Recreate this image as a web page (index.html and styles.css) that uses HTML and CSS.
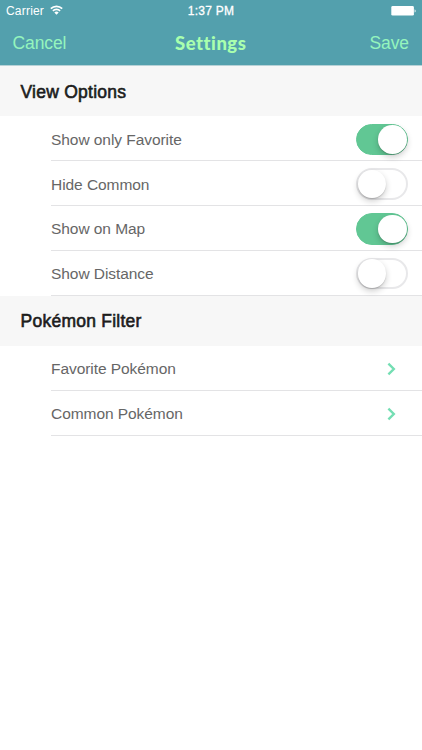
FILE: index.html
```html
<!DOCTYPE html>
<html lang="en">
<head>
  <meta charset="UTF-8">
  <meta name="viewport" content="width=device-width, initial-scale=1.0">
  <title>Settings</title>
  <link rel="stylesheet" href="styles.css">
</head>
<body>

<header class="top">
  <!-- Status bar -->
  <div class="status">
    <div class="status-left">
      <span class="carrier">Carrier</span>
      <svg class="wifi" width="13" height="10" viewBox="0 0 13 10" fill="none" stroke="#fff" stroke-width="1.7">
        <path d="M0.8 3.7a8 8 0 0 1 11.4 0"/>
        <path d="M2.9 5.9a5.1 5.1 0 0 1 7.2 0"/>
        <path d="M6.5 9.8L4.3 7.6a3 3 0 0 1 4.4 0z" fill="#fff" stroke="none"/>
      </svg>
    </div>
    <span class="clock">1:37 PM</span>
    <div class="status-right">
      <svg width="25" height="10" viewBox="0 0 25 10" fill="#fff">
        <rect x="0.3" y="0" width="22.6" height="9.6" rx="1.4"/>
        <path d="M23.6 3.2c1.4.5 1.4 2.8 0 3.3z"/>
      </svg>
    </div>
  </div>

  <!-- Navigation -->
  <nav class="nav">
    <span class="nav-btn">Cancel</span>
    <h1>Settings</h1>
    <span class="nav-btn save">Save</span>
  </nav>
</header>

<main>
  <h2>View Options</h2>
  <ul class="list">
    <li><span>Show only Favorite</span><i class="switch on"></i></li>
    <li><span>Hide Common</span><i class="switch"></i></li>
    <li><span>Show on Map</span><i class="switch on"></i></li>
    <li><span>Show Distance</span><i class="switch"></i></li>
  </ul>

  <h2>Pokémon Filter</h2>
  <ul class="list">
    <li>
      <span>Favorite Pokémon</span>
      <svg class="arrow" width="9" height="14" viewBox="0 0 9 14"><path d="M1.4 1.7L6.8 7L1.4 12.3"/></svg>
    </li>
    <li>
      <span>Common Pokémon</span>
      <svg class="arrow" width="9" height="14" viewBox="0 0 9 14"><path d="M1.4 1.7L6.8 7L1.4 12.3"/></svg>
    </li>
  </ul>
</main>

</body>
</html>
```

FILE: styles.css
```css
:root {
  --color-bar: #53a0ad;
  --color-tint: #95f5bd;
  --color-title: #a9ffae;
  --color-section: #f7f7f7;
  --color-line: #e3e3e5;
  --color-green: #61c794;
}

* {
  box-sizing: border-box;
}

body {
  margin: 0;
  background: #fff;
  font-family: "Liberation Sans", Arial, sans-serif;
}

/* Top bar */
.top {
  height: 66px;
  background: var(--color-bar);
  border-bottom: 1px solid #b7d2d7;
}

.status {
  display: grid;
  grid-template-columns: 1fr auto 1fr;
  align-items: center;
  height: 22px;
  padding: 0 6px;
  color: #fff;
  font-size: 12px;
}

.status-left {
  display: flex;
  align-items: center;
  gap: 6px;
}

.carrier {
  letter-spacing: 0.2px;
}

.wifi {
  margin-bottom: 2px;
}

.clock {
  letter-spacing: 0.25px;
  -webkit-text-stroke: 0.3px #fff;
}

.status-right {
  display: flex;
  justify-content: flex-end;
}

.nav {
  display: grid;
  grid-template-columns: 1fr auto 1fr;
  align-items: center;
  height: 43px;
  padding: 0 13px 0 12.5px;
}

.nav-btn {
  color: var(--color-tint);
  font-size: 17.5px;
  letter-spacing: -0.1px;
}

.save {
  text-align: right;
}

.nav h1 {
  margin: 0;
  padding-bottom: 2px;
  color: var(--color-title);
  font-family: Lato, sans-serif;
  font-size: 18.5px;
  font-weight: 900;
  letter-spacing: 0.5px;
  font-variant-ligatures: none;
}

/* Sections */
h2 {
  display: flex;
  align-items: center;
  height: 50.4px;
  margin: 0;
  padding: 2px 0 0 20.5px;
  background: var(--color-section);
  color: #1c1c1c;
  font-size: 17.5px;
  font-weight: normal;
  letter-spacing: 0.25px;
  -webkit-text-stroke: 0.6px #1c1c1c;
}

.list {
  margin: 0;
  padding: 0 0 0 51px;
  list-style: none;
}

.list li {
  display: flex;
  align-items: center;
  justify-content: space-between;
  height: 44.8px;
  padding: 2px 14.5px 0 0;
  border-bottom: 1px solid var(--color-line);
  color: #666;
  font-size: 15.5px;
  letter-spacing: -0.06px;
}

.list li span {
  padding-top: 1px;
}

/* Switch */
.switch {
  display: flex;
  align-items: center;
  width: 52px;
  height: 31.5px;
  border: 2px solid #e8e8ea;
  border-radius: 16px;
}

.switch::before {
  content: "";
  width: 28.5px;
  height: 28.5px;
  border-radius: 50%;
  background: #fff;
  box-shadow: 0 3px 6px rgba(0,0,0,0.2), 0 1px 1px rgba(0,0,0,0.15);
}

.switch.on {
  justify-content: flex-end;
  border-width: 1.5px;
  border-color: var(--color-green);
  background: var(--color-green);
}

.arrow {
  margin-right: 11.5px;
  fill: none;
  stroke: #74deb3;
  stroke-width: 2.4;
}
```
